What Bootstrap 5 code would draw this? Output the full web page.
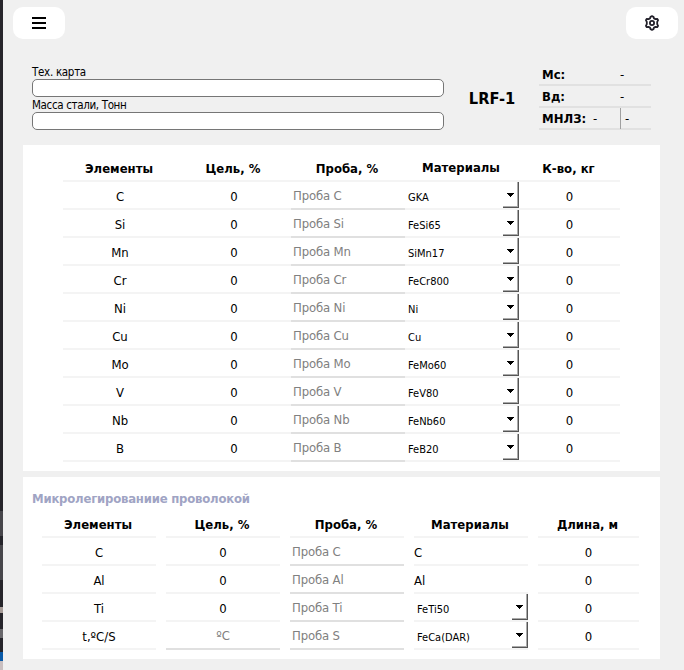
<!DOCTYPE html>
<html lang="ru">
<head>
<meta charset="utf-8">
<meta name="viewport" content="width=device-width, initial-scale=1">
<title>LRF-1</title>
<link href="https://cdn.jsdelivr.net/npm/bootstrap@5.3.0/dist/css/bootstrap.min.css" rel="stylesheet">
<style>
body{background:#f0f0f0;color:#000;font:13px/16px "DejaVu Sans Condensed","DejaVu Sans",sans-serif;font-stretch:condensed;width:684px;height:670px;overflow:hidden}
.edge{width:3px;height:670px;background:linear-gradient(#26252b 511px,#47464b 511px 536px,#26252b 536px 545px,#47464b 545px 580px,#26252b 580px 607px,#a79c98 607px 613px,#26252b 613px 629px,#68676b 629px 638px,#26252b 638px 652px,#0a5aa8 652px 661px,#c9bfc0 661px)}
.screen{width:681px;height:670px}
.tool{width:52px;height:32px;border:0;border-radius:10px;background:#fff}
.topbar{padding:7px 6px 0 10px;height:39px}
.summary{height:106px;padding:26px 9px 0 29px}
.fields{width:412px}
.fields label{font-size:11.5px;line-height:14px;height:15px;letter-spacing:-.35px;padding-top:1px}
.fields label:first-child{height:14px;padding-top:0;letter-spacing:-.3px}
.fields input{height:18px;border:1px solid #767676;border-radius:5px;font-size:11px}
.unit{width:96px;font-size:16.3px;padding-top:24px;line-height:20px}
.status{width:112px;margin-left:-1px;margin-top:-1px}
.status>div{height:22px;border-bottom:2px solid #e1e1e1;padding-left:3px;line-height:22px}
.status .s-name{width:78px}
.status .first{width:28px;margin-left:auto;border-right:1px solid #a0a0a0;height:21px}
.status .second{width:30px;padding-left:4px}
.panel{width:637px;margin-left:20px;background:#fff}
.panel-main{height:326px;padding:9px 40px;margin-bottom:6px}
.panel-wire{height:182px;padding:12px 19px 0}
.rowline{display:grid;height:28px;grid-template-columns:114px 114px 114px 114px 101px}
.panel-wire .rowline{column-gap:10px}
.cell{height:28px;border-bottom:2px solid #f4f4f4;text-align:center;line-height:26px;padding-top:2px;white-space:nowrap}
.hd{font-weight:bold;padding-right:2px}
.raise{padding-top:1px}
.probe{border-color:#e0e0e0;color:#808080;text-align:left;padding:1px 0 0 2px;letter-spacing:-.15px}
.temp{border-color:#e0e0e0;color:#808080;padding-top:1px}
.mat{text-align:left}
.combo{display:flex;justify-content:space-between;text-align:left;font-size:11px;padding:0 0 0 3px}
.combo span{padding-top:3px}
.arrow{width:16px;height:26px;border-right:1px solid #555;border-bottom:1px solid #555;box-shadow:inset -1px -1px #aaa;display:flex;justify-content:center;padding:11px 1px 0 0}
.arrow svg{display:block}
.wiretitle{color:#a0a4c4;font-weight:bold;height:21px;margin-left:-10px;line-height:20px;letter-spacing:-.22px}
</style>
</head>
<body class="d-flex">
<div class="edge flex-shrink-0"></div>
<main class="screen flex-shrink-0">
  <nav class="topbar d-flex justify-content-between">
    <button class="tool p-0 d-flex align-items-center justify-content-center" aria-label="Меню"><svg width="14" height="12" viewBox="0 0 14 12" shape-rendering="crispEdges"><path d="M0 0h14v2H0zM0 5h14v2H0zM0 10h14v2H0z"/></svg></button>
    <button class="tool p-0 d-flex align-items-center justify-content-center" aria-label="Настройки"><svg width="16" height="16" viewBox="0 0 16 16" fill="none" stroke="#22202a" stroke-width="1.8" stroke-linejoin="round"><path d="M8 1.2 9.5 1.8 10 3.4 11.5 4.1 13.2 3.8 14.1 5.2 13.2 6.9V9.1L14.1 10.8 13.2 12.2 11.5 11.9 10 12.6 9.5 14.2 8 14.8 6.5 14.2 6 12.6 4.5 11.9 2.8 12.2 1.9 10.8 2.8 9.1V6.9L1.9 5.2 2.8 3.8 4.5 4.1 6 3.4 6.5 1.8z"/><circle cx="8" cy="8" r="2.1"/></svg></button>
  </nav>
  <section class="summary d-flex">
    <div class="fields d-flex flex-column">
      <label for="card-no">Тех. карта</label><input id="card-no" class="w-100">
      <label for="mass">Масса стали, Тонн</label><input id="mass" class="w-100">
    </div>
    <div class="unit fw-bold text-center">LRF-1</div>
    <div class="status">
      <div class="d-flex"><b class="s-name">Мс:</b><span>-</span></div>
      <div class="d-flex"><b class="s-name">Вд:</b><span>-</span></div>
      <div class="d-flex"><b>МНЛЗ:</b><span class="first">-</span><span class="second">-</span></div>
    </div>
  </section>
  <section class="panel panel-main" id="main-table"></section>
  <section class="panel panel-wire" id="wire-table"><div class="wiretitle">Микролегированиие проволокой</div></section>
</main>
<script>
const arrow = '<i class="arrow"><svg width="7" height="4" shape-rendering="crispEdges"><path d="M0 0h7v1H0zM1 1h5v1H1zM2 2h3v1H2zM3 3h1v1H3z"/></svg></i>';
const cell = (text, cls = '') => `<div class="cell ${cls}">${text}</div>`;
const combo = text => cell(`<span>${text}</span>${arrow}`, 'combo');
const row = cells => `<div class="rowline">${cells.join('')}</div>`;
const head = (last, raise) => row([cell('Элементы','hd'), cell('Цель, %','hd'), cell('Проба, %','hd'), cell('Материалы','hd ' + raise), cell(last,'hd')]);
const elements = [['C','GKA'],['Si','FeSi65'],['Mn','SiMn17'],['Cr','FeCr800'],['Ni','Ni'],['Cu','Cu'],['Mo','FeMo60'],['V','FeV80'],['Nb','FeNb60'],['B','FeB20']];
document.getElementById('main-table').innerHTML = head('К-во, кг','raise') +
  elements.map(([e, m]) => row([cell(e), cell(0), cell('Проба ' + e,'probe'), combo(m), cell(0)])).join('');
document.getElementById('wire-table').innerHTML += head('Длина, м','') + [
  [cell('C'), cell(0), cell('Проба C','probe'), cell('C','mat'), cell(0)],
  [cell('Al'), cell(0), cell('Проба Al','probe'), cell('Al','mat'), cell(0)],
  [cell('Ti'), cell(0), cell('Проба Ti','probe'), combo('FeTi50'), cell(0)],
  [cell('t,ºC/S'), cell('ºC','temp'), cell('Проба S','probe'), combo('FeCa(DAR)'), cell(0)]
].map(row).join('');
</script>
<script src="https://cdn.jsdelivr.net/npm/bootstrap@5.3.0/dist/js/bootstrap.bundle.min.js"></script>
</body>
</html>
